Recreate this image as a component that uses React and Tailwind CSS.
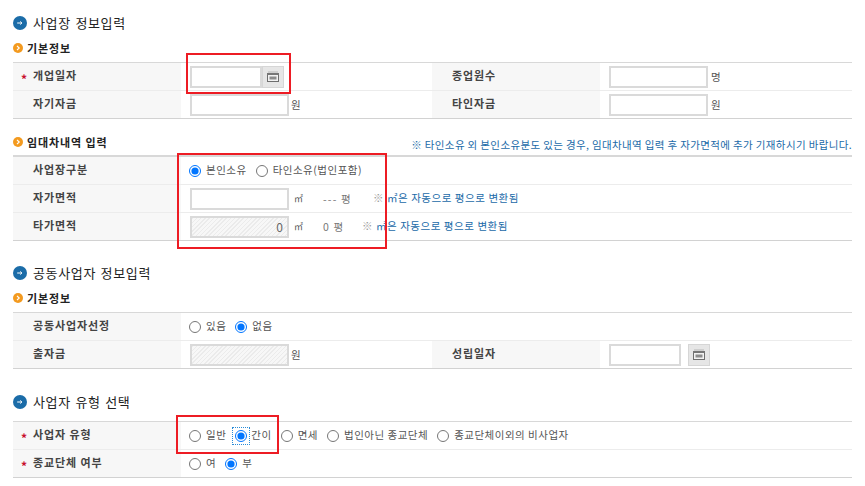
import React from "react";

function BlueIcon() {
  return (
    <svg width="14" height="14" viewBox="0 0 14 14" className="shrink-0">
      <circle cx="7" cy="7" r="7" fill="#1b6ca8" />
      <path d="M4.2 7h4.6M7.3 5.5 8.9 7 7.3 8.5" stroke="#fff" strokeWidth="1" fill="none" />
    </svg>
  );
}

function OrangeIcon() {
  return (
    <svg width="10" height="10" viewBox="0 0 10 10" className="shrink-0">
      <circle cx="5" cy="5" r="5" fill="#f39a1f" />
      <path d="M4 2.8 6.2 5 4 7.2" stroke="#fff" strokeWidth="1.2" fill="none" />
    </svg>
  );
}

function Heading({ children, className }) {
  return (
    <div className={"flex items-center h-4 gap-[6px] " + (className || "")}>
      <BlueIcon />
      <span className="text-[13px] leading-4 text-[#222] tracking-[0.65px] [word-spacing:1px]">{children}</span>
    </div>
  );
}

function Sub({ children, className }) {
  return (
    <div className={"flex items-center h-4 gap-[4px] " + (className || "")}>
      <OrangeIcon />
      <span className="text-[11px] leading-4 font-bold text-[#222] tracking-[0.9px]">{children}</span>
    </div>
  );
}

function Star() {
  return <span className="absolute left-[8px] top-[10px] text-[12px] leading-none font-bold text-[#c8102e]">*</span>;
}

function Label({ children, star }) {
  return (
    <div className="relative h-full shrink-0 w-[168px] bg-[#f7f7f7] flex items-center pl-[20px] pb-[2px] text-[11px] font-bold text-[#444] tracking-[0.9px]">
      {star && <Star />}
      {children}
    </div>
  );
}

function Value({ children, className }) {
  return <div className={"flex items-center h-full pl-[9px] text-[10.5px] text-[#555] " + (className || "w-[251px]")}>{children}</div>;
}

function Row({ children, last }) {
  return <div className={"flex items-center h-[28px] border-b " + (last ? "border-[#d2d2d2]" : "border-[#ececec]")}>{children}</div>;
}

function Table({ children, className }) {
  return <div className={"border-[#d8d8d8] " + (className || "border-t")}>{children}</div>;
}

function Input({ hatched, value, className }) {
  return (
    <div
      className={
        "h-[22px] border-2 border-[#dadada] flex items-center justify-end pr-1 text-[12px] text-[#666] " +
        (hatched
          ? "bg-[repeating-linear-gradient(135deg,#ebebeb_0px,#ebebeb_1px,#f7f7f7_1px,#f7f7f7_3px)] "
          : "bg-white ") +
        (className || "w-[99px]")
      }
    >
      {value}
    </div>
  );
}

function CalButton() {
  return (
    <div className="w-[22px] h-[22px] shrink-0 border border-[#d6d6d6] bg-[#e6e6e6] flex items-center justify-center">
      <svg width="12" height="11" viewBox="0 0 12 11">
        <rect x="0.5" y="2.5" width="11" height="8" fill="#f2f2f2" stroke="#6e6e6e" />
        <path d="M1.5 1h9" stroke="#8a8a8a" strokeDasharray="1 1" />
        <rect x="0" y="2" width="12" height="2" fill="#777" />
        <rect x="2.5" y="5.5" width="7" height="3" fill="#8c8c8c" />
      </svg>
    </div>
  );
}

function Radio({ checked, label, className }) {
  return (
    <label className={"flex items-center gap-[5px] " + (className || "")}>
      <input type="radio" defaultChecked={checked} className="w-[12px] h-[12px] m-0" />
      <span className="pb-[1px] tracking-[0.5px]">{label}</span>
    </label>
  );
}

const noteClass = "pb-[1px] text-[10.5px] text-[#1a6aa8] tracking-[0.55px]";

export default function App() {
  return (
    <div
      className="relative w-[865px] h-[486px] bg-white overflow-hidden pl-[13px] pr-[13px] pt-[15px]"
      style={{ fontFamily: '"Noto Sans CJK KR", "Noto Sans", sans-serif' }}
    >
      <Heading>사업장 정보입력</Heading>
      <Sub className="mt-[9px]">기본정보</Sub>
      <Table className="border-t mt-[6px]">
        <Row>
          <Label star>개업일자</Label>
          <Value>
            <Input className="w-[72px]" />
            <CalButton />
          </Value>
          <Label>종업원수</Label>
          <Value className="flex-1 gap-[3px]"><Input />명</Value>
        </Row>
        <Row last>
          <Label>자기자금</Label>
          <Value className="w-[251px] gap-[2px]"><Input />원</Value>
          <Label>타인자금</Label>
          <Value className="flex-1 gap-[3px]"><Input />원</Value>
        </Row>
      </Table>

      <div className="mt-[13px] flex items-center justify-between h-5">
        <Sub>임대차내역 입력</Sub>
        <span className="text-[10.5px] leading-4 mt-[5px] text-[#1a6aa8] tracking-[0.36px]">※ 타인소유 외 본인소유분도 있는 경우, 임대차내역 입력 후 자가면적에 추가 기재하시기 바랍니다.</span>
      </div>
      <Table className="mt-[3px] border-t-2">
        <Row>
          <Label>사업장구분</Label>
          <Value className="flex-1 !pl-[8px] gap-[9px] text-[#444]">
            <Radio checked label="본인소유" />
            <Radio label="타인소유(법인포함)" />
          </Value>
        </Row>
        <Row>
          <Label>자가면적</Label>
          <Value className="flex-1">
            <Input className="w-[99px]" />
            <span className="ml-[5px] w-[29px] text-[9px]">㎡</span>
            <span className="w-[50px] text-[#777] tracking-[1.2px]">--- 평</span>
            <span className={noteClass}><span className="text-[#999]">※</span> ㎡은 자동으로 평으로 변환됨</span>
          </Value>
        </Row>
        <Row last>
          <Label>타가면적</Label>
          <Value className="flex-1">
            <Input hatched value="0" className="w-[99px]" />
            <span className="ml-[5px] w-[29px] text-[9px]">㎡</span>
            <span className="w-[39px] text-[#777] tracking-[1.2px]">0 평</span>
            <span className={noteClass}><span className="text-[#999]">※</span> ㎡은 자동으로 평으로 변환됨</span>
          </Value>
        </Row>
      </Table>

      <Heading className="mt-[24px]">공동사업자 정보입력</Heading>
      <Sub className="mt-[9px]">기본정보</Sub>
      <Table className="border-t mt-[6px]">
        <Row>
          <Label>공동사업자선정</Label>
          <Value className="flex-1 !pl-[8px] gap-[9px] text-[#444]">
            <Radio label="있음" />
            <Radio checked label="없음" />
          </Value>
        </Row>
        <Row last>
          <Label>출자금</Label>
          <Value className="w-[251px] gap-[2px]"><Input hatched /><span>원</span></Value>
          <Label>성립일자</Label>
          <Value className="flex-1">
            <Input className="w-[72px]" />
            <span className="ml-[7px]"><CalButton /></span>
          </Value>
        </Row>
      </Table>

      <Heading className="mt-[25px]">사업자 유형 선택</Heading>
      <Table className="border-t mt-[11px]">
        <Row>
          <Label star>사업자 유형</Label>
          <Value className="flex-1 !pl-[8px] text-[#444]">
            <Radio label="일반" />
            <label className="flex items-center ml-[9px] mr-[9px]">
              <span className="relative flex items-center justify-center w-[12px] h-[12px]">
                <input type="radio" defaultChecked className="w-[12px] h-[12px] m-0" />
                <span className="absolute -inset-[3px] border border-dotted border-[#2a8cd8]" />
              </span>
              <span className="ml-[4px] pb-[1px] tracking-[0.5px]">간이</span>
            </label>
            <Radio label="면세" className="mr-[9px]" />
            <Radio label="법인아닌 종교단체" className="mr-[9px]" />
            <Radio label="종교단체이외의 비사업자" />
          </Value>
        </Row>
        <Row last>
          <Label star>종교단체 여부</Label>
          <Value className="flex-1 !pl-[8px] gap-[9px] text-[#444]">
            <Radio label="여" />
            <Radio checked label="부" />
          </Value>
        </Row>
      </Table>

      <div className="absolute left-[186px] top-[53px] w-[105px] h-[41px] border-2 border-[#ed1c24]" />
      <div className="absolute left-[177px] top-[153px] w-[210px] h-[96px] border-2 border-[#ed1c24]" />
      <div className="absolute left-[176px] top-[415px] w-[103px] h-[39px] border-2 border-[#ed1c24]" />
    </div>
  );
}
